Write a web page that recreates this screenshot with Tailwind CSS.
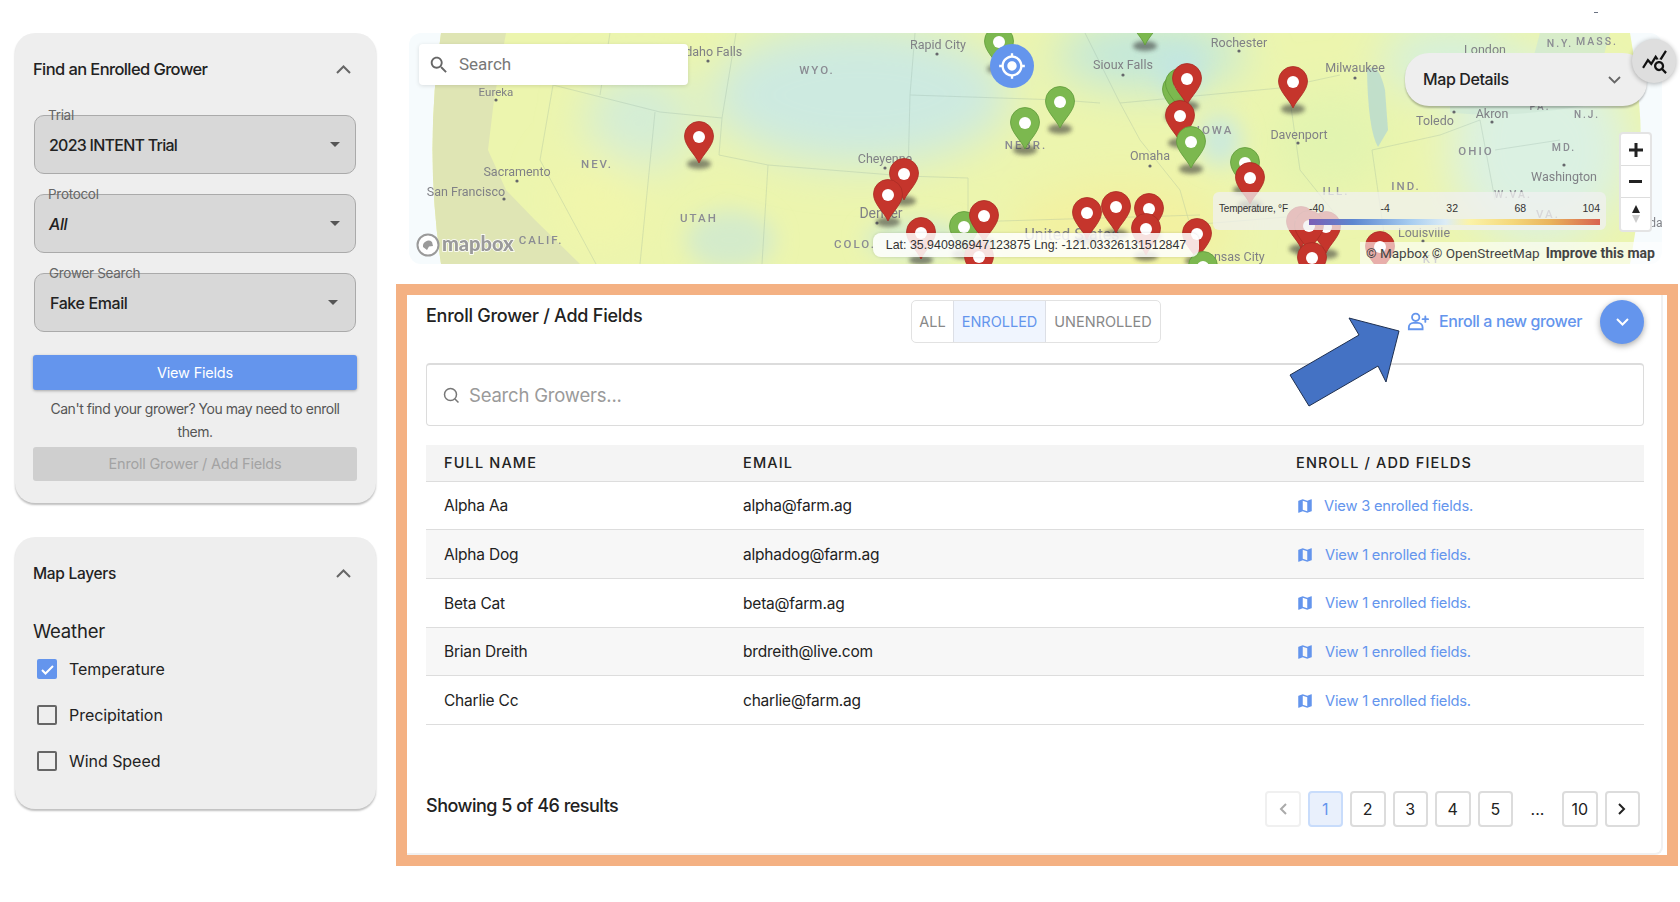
<!DOCTYPE html>
<html lang="en">
<head>
<meta charset="UTF-8">
<title>Enroll Grower</title>
<script src="https://cdn.jsdelivr.net/npm/@tailwindcss/browser@4"></script>
</head>
<body class="bg-white font-['Inter',sans-serif] text-[#222]">
<div class="relative flex w-[1680px] h-[902px] overflow-hidden pl-[15px] pt-[33px]">
    <span class="absolute left-[1594px] top-[12px] w-[4px] h-px bg-gray-500"></span>

    <!-- left column -->
    <div class="w-[361px] shrink-0 flex flex-col gap-[34px]">
        <div class="h-[470px] bg-[#eeeeee] rounded-[20px] shadow-[0_2px_2px_rgba(0,0,0,0.25)] px-[18px] pt-[26px]">
            <div class="flex items-center justify-between h-[21px] pr-[7px]">
                <h2 class="text-[16.5px] font-medium tracking-[-0.6px]">Find an Enrolled Grower</h2>
                <svg class="w-[15px] h-[9px] text-[#666]" viewBox="0 0 15 9" fill="none" stroke="currentColor" stroke-width="2"><path d="M1 8l6.5-6.5L14 8"/></svg>
            </div>
            <!-- selects -->
            <div class="flex flex-col gap-[20px] mt-[35px] pl-[1px] w-[323px]">
                <div class="relative h-[59px] bg-[#d8d8d8] border-[1.5px] border-[#aaaaaa] rounded-[10px] flex items-center justify-between pl-[14px] pr-[15px]">
                    <span class="absolute left-[8px] -top-[10px] px-[5px] text-[13.5px] leading-[18px] text-[#666] tracking-[-0.3px] [background:linear-gradient(#eeeeee_50%,transparent_50%)]">Trial</span>
                    <span class="text-[16px] font-medium tracking-[-0.75px]">2023 INTENT Trial</span>
                    <span class="w-0 h-0 border-x-[5.5px] border-x-transparent border-t-[5.5px] border-t-[#555]"></span>
                </div>
                <div class="relative h-[59px] bg-[#d8d8d8] border-[1.5px] border-[#aaaaaa] rounded-[10px] flex items-center justify-between pl-[14px] pr-[15px]">
                    <span class="absolute left-[8px] -top-[10px] px-[5px] text-[13.5px] leading-[18px] text-[#666] tracking-[-0.3px] [background:linear-gradient(#eeeeee_50%,transparent_50%)]">Protocol</span>
                    <span class="text-[16px] font-medium italic tracking-[-0.4px]">All</span>
                    <span class="w-0 h-0 border-x-[5.5px] border-x-transparent border-t-[5.5px] border-t-[#555]"></span>
                </div>
                <div class="relative h-[59px] bg-[#d8d8d8] border-[1.5px] border-[#aaaaaa] rounded-[10px] flex items-center justify-between pl-[15px] pr-[17px]">
                    <span class="absolute left-[9px] -top-[10px] px-[5px] text-[13.5px] leading-[18px] text-[#666] tracking-[-0.3px] [background:linear-gradient(#eeeeee_50%,transparent_50%)]">Grower Search</span>
                    <span class="text-[16px] font-medium tracking-[-0.4px]">Fake Email</span>
                    <span class="w-0 h-0 border-x-[5.5px] border-x-transparent border-t-[5.5px] border-t-[#555]"></span>
                </div>
            </div>
            <button class="mt-[23px] w-[324px] h-[35px] bg-[#6495ed] rounded-[3px] text-white text-[14.5px] tracking-[-0.2px] shadow-[0_1px_3px_rgba(0,0,0,0.3)]">View Fields</button>
            <p class="mt-[8px] w-[324px] text-center text-[14px] leading-[22.5px] text-[#555] tracking-[-0.47px]">Can't find your grower? You may need to enroll them.</p>
            <button class="mt-[4px] w-[324px] h-[34px] bg-[#cfcfcf] rounded-[3px] text-[#a3a3a3] text-[14.5px] tracking-[-0.2px]">Enroll Grower / Add Fields</button>
        </div>

        <div class="h-[272px] bg-[#eeeeee] rounded-[20px] shadow-[0_2px_2px_rgba(0,0,0,0.25)] px-[18px] pt-[26px]">
            <div class="flex items-center justify-between h-[21px] pr-[7px]">
                <h2 class="text-[15.5px] font-medium tracking-[-0.3px]">Map Layers</h2>
                <svg class="w-[15px] h-[9px] text-[#666]" viewBox="0 0 15 9" fill="none" stroke="currentColor" stroke-width="2"><path d="M1 8l6.5-6.5L14 8"/></svg>
            </div>
            <h3 class="mt-[35px] text-[18.5px] leading-[24px] tracking-[-0.2px]">Weather</h3>
            <div class="mt-[16px] pl-[4px] flex flex-col gap-[26px] text-[16px] tracking-[-0.05px]">
                <label class="flex items-center gap-[12px] h-[20px]">
                    <span class="w-[20px] h-[20px] rounded-[2px] bg-[#6495ed] flex items-center justify-center">
                        <svg class="w-[15px] h-[15px]" viewBox="0 0 15 15" fill="none" stroke="white" stroke-width="2"><path d="M2 8l3.5 3.5L13 4"/></svg>
                    </span>
                    Temperature
                </label>
                <label class="flex items-center gap-[12px] h-[20px]">
                    <span class="w-[20px] h-[20px] rounded-[2px] border-2 border-[#666]"></span>
                    Precipitation
                </label>
                <label class="flex items-center gap-[12px] h-[20px]">
                    <span class="w-[20px] h-[20px] rounded-[2px] border-2 border-[#666]"></span>
                    Wind Speed
                </label>
            </div>
        </div>
    </div>

    <!-- right column -->
    <div class="ml-[20px] w-[1282px] shrink-0 flex flex-col">
        <!-- map -->
        <div class="relative ml-[13px] w-[1253px] h-[231px] rounded-[12px] bg-[#f6fbfd]">
            <svg class="absolute inset-0 blur-[0.4px] font-['Roboto',sans-serif]" width="1253" height="231" viewBox="409 33 1253 231">
                <defs>
                    <filter id="b30" x="-50%" y="-50%" width="200%" height="200%"><feGaussianBlur stdDeviation="22"/></filter>
                    <filter id="b12" x="-50%" y="-50%" width="200%" height="200%"><feGaussianBlur stdDeviation="11"/></filter>
                    <filter id="sh" x="-50%" y="-80%" width="200%" height="260%"><feGaussianBlur stdDeviation="2.2"/></filter>
                    <clipPath id="globe"><path d="M441 33Q424 150 441 264L1630 264Q1652 150 1630 33Z"/></clipPath>
                    <g id="red">
                        <ellipse cx="0" cy="27" rx="12" ry="5" fill="#333" opacity=".55" filter="url(#sh)"/>
                        <path d="M0 26C-4 17-14.5 9-14.5-1A14.5 14.5 0 1 1 14.5-1C14.5 9 4 17 0 26Z" fill="#c5352c" stroke="#a92c24" stroke-width=".8"/>
                        <circle r="6" fill="#fff"/>
                    </g>
                    <g id="green">
                        <ellipse cx="0" cy="27" rx="12" ry="5" fill="#333" opacity=".55" filter="url(#sh)"/>
                        <path d="M0 26C-4 17-14.5 9-14.5-1A14.5 14.5 0 1 1 14.5-1C14.5 9 4 17 0 26Z" fill="#7cb84f" stroke="#5f9a3a" stroke-width=".8"/>
                        <circle r="6" fill="#fff"/>
                    </g>
                </defs>
                <g clip-path="url(#globe)">
                    <rect x="409" y="33" width="1253" height="231" fill="#ecf5ae"/>
                    <!-- weather colours -->
                    <g filter="url(#b30)">
                        <ellipse cx="860" cy="95" rx="150" ry="70" fill="#cdeae0"/>
                        <ellipse cx="640" cy="120" rx="55" ry="50" fill="#d4edd6"/>
                        <ellipse cx="1150" cy="55" rx="95" ry="35" fill="#c2e7dc"/>
                        <ellipse cx="1540" cy="150" rx="90" ry="95" fill="#dbf1e2"/>
                        <ellipse cx="1450" cy="60" rx="70" ry="35" fill="#d5f0dc"/>
                        <ellipse cx="1120" cy="230" rx="110" ry="50" fill="#f3f1a0"/>
                        <ellipse cx="1330" cy="140" rx="60" ry="50" fill="#e2f4b0"/>
                        <ellipse cx="600" cy="200" rx="45" ry="50" fill="#f1f6ab"/>
                    </g>
                    <g filter="url(#b12)">
                        <ellipse cx="1220" cy="140" rx="22" ry="26" fill="#cceadb"/>
                        <ellipse cx="730" cy="240" rx="45" ry="30" fill="#d4ebcb"/>
                        <ellipse cx="915" cy="240" rx="50" ry="18" fill="#d0ead2"/>
                        <ellipse cx="1180" cy="72" rx="22" ry="22" fill="#c2e6e2"/>
                    </g>
                    <!-- ocean and lake -->
                    <path d="M420 33L506 33 494 100 488 150 506 190 535 220 580 264 420 264Z" fill="#dfe5b4"/>
                    <path d="M1367 70Q1378 60 1385 90L1388 130 1378 147Q1368 130 1367 70Z" fill="#b8d9cf" opacity=".8"/>
                    <path d="M1450 100Q1500 90 1530 70L1540 33 1610 33 1590 105Q1500 120 1450 112Z" fill="#cbe6d6" opacity=".6"/>
                    <!-- state lines -->
                    <g fill="none" stroke="#8ea99c" stroke-width=".8" opacity=".32">
                        <path d="M553 85L660 112 722 118 722 118 719 155 768 165 905 176 968 178 968 222"/>
                        <path d="M736 33L722 118"/>
                        <path d="M610 33L600 95"/>
                        <path d="M655 112L640 264"/>
                        <path d="M768 165L762 264"/>
                        <path d="M915 33L910 95 908 176"/>
                        <path d="M910 95L1060 100 1100 103"/>
                        <path d="M1120 103L1280 88 1340 75"/>
                        <path d="M1085 33L1120 103 1140 140 1180 190 1190 225"/>
                        <path d="M1190 225L1310 215"/>
                        <path d="M1290 100L1300 170 1340 220"/>
                        <path d="M1372 150L1385 240"/>
                        <path d="M1372 150L1440 135 1480 120 1495 200"/>
                        <path d="M1495 150L1560 140"/>
                        <path d="M968 222L1200 215"/>
                        <path d="M553 85L540 160 596 264"/>
                    </g>
                </g>
                <!-- labels -->
                <g fill="#808186" font-size="12.5" text-anchor="middle">
                    <text x="712" y="56">Idaho Falls</text>
                    <text x="938" y="49">Rapid City</text>
                    <text x="1123" y="69">Sioux Falls</text>
                    <text x="1239" y="47">Rochester</text>
                    <text x="1355" y="72">Milwaukee</text>
                    <text x="1485" y="54">London</text>
                    <text x="496" y="96" font-size="11.5">Eureka</text>
                    <text x="517" y="176">Sacramento</text>
                    <text x="466" y="196">San Francisco</text>
                    <text x="885" y="163">Cheyenne</text>
                    <text x="881" y="218" font-size="14">Denver</text>
                    <text x="1150" y="160">Omaha</text>
                    <text x="1299" y="139">Davenport</text>
                    <text x="1435" y="125">Toledo</text>
                    <text x="1492" y="118">Akron</text>
                    <text x="1564" y="181">Washington</text>
                    <text x="1424" y="237">Louisville</text>
                    <text x="1232" y="261">Kansas City</text>
                    <text x="1072" y="240" font-size="16">United States</text>
                </g>
                <g fill="#8b8c93" font-size="11.5" font-weight="500" letter-spacing="2" text-anchor="middle">
                    <text x="817" y="74">WYO.</text>
                    <text x="597" y="168">NEV.</text>
                    <text x="699" y="222">UTAH</text>
                    <text x="541" y="244">CALIF.</text>
                    <text x="855" y="248">COLO.</text>
                    <text x="1026" y="149">NEBR.</text>
                    <text x="1215" y="134">IOWA</text>
                    <text x="1476" y="155">OHIO</text>
                    <text x="1564" y="151" font-size="10.5">MD.</text>
                    <text x="1587" y="118" font-size="10">N.J.</text>
                    <text x="1540" y="110" font-size="10">PA.</text>
                    <text x="1406" y="190">IND.</text>
                    <text x="1336" y="195">ILL.</text>
                    <text x="1513" y="198" font-size="10.5">W.VA.</text>
                    <text x="1548" y="218">VA.</text>
                    <text x="1560" y="47" font-size="10.5">N.Y.</text>
                    <text x="1597" y="45" font-size="10.5">MASS.</text>
                    <text x="1432" y="263">KY</text>
                </g>
                <g fill="#66676c">
                    <circle cx="708" cy="61" r="1.6"/><circle cx="937" cy="54" r="1.6"/><circle cx="1123" cy="75" r="1.6"/>
                    <circle cx="1239" cy="51" r="1.6"/><circle cx="1355" cy="78" r="1.6"/><circle cx="496" cy="100" r="1.6"/>
                    <circle cx="517" cy="181" r="1.6"/><circle cx="504" cy="199" r="1.6"/><circle cx="885" cy="168" r="1.6"/>
                    <circle cx="877" cy="223" r="1.6"/><circle cx="1150" cy="166" r="1.6"/><circle cx="1298" cy="143" r="1.6"/>
                    <circle cx="1454" cy="112" r="1.6"/><circle cx="1492" cy="122" r="1.6"/><circle cx="1564" cy="165" r="1.6"/><circle cx="1423" cy="241" r="1.6"/>
                </g>
                <text x="1656" y="227" fill="#808186" font-size="12" text-anchor="middle">da</text>
                <!-- pins -->
                <use href="#green" x="999" y="42"/>
                <use href="#green" x="1145" y="19"/>
                <use href="#green" x="1025" y="123"/>
                <use href="#green" x="1060" y="102"/>
                <use href="#green" x="1177" y="90"/>
                <use href="#green" x="1180" y="84"/>
                <use href="#red" x="699" y="137"/>
                <use href="#red" x="904" y="174"/>
                <use href="#red" x="888" y="195"/>
                <use href="#red" x="921" y="233"/>
                <use href="#green" x="964" y="227"/>
                <use href="#red" x="984" y="216"/>
                <use href="#red" x="979" y="257"/>
                <use href="#red" x="1187" y="79"/>
                <use href="#red" x="1180" y="116"/>
                <use href="#green" x="1191" y="142"/>
                <use href="#red" x="1293" y="82"/>
                <use href="#green" x="1245" y="163"/>
                <use href="#red" x="1250" y="178"/>
                <use href="#red" x="1087" y="213"/>
                <use href="#red" x="1149" y="209"/>
                <use href="#red" x="1116" y="207"/>
                <use href="#red" x="1146" y="229"/>
                <use href="#red" x="1197" y="234"/>
                <use href="#green" x="1203" y="267"/>
                <use href="#red" x="1301" y="222"/>
                <use href="#red" x="1326" y="227"/>
                <use href="#red" x="1309" y="226"/>
                <use href="#red" x="1312" y="258"/>
                <use href="#red" x="1380" y="247"/>
                <!-- mapbox logo -->
                <g>
                    <circle cx="428" cy="245" r="10.5" fill="#fff" stroke="#9a9a9a" stroke-width="2"/>
                    <path d="M423 247a5.500 5.500 0 0 1 9-5l1 4-4 .5-2 3.500z" fill="#9a9a9a"/>
                    <text x="442" y="251" fill="#9a9a9a" stroke="#fff" stroke-width="1.500" paint-order="stroke" font-size="20" font-weight="900" font-family="Lato, sans-serif">mapbox</text>
                </g>
            </svg>

            <!-- map overlays -->
            <div class="absolute left-[10px] top-[11px] w-[269px] h-[41px] bg-white rounded-[4px] shadow-[0_1px_4px_rgba(0,0,0,0.12)] flex items-center pl-[9px] gap-[9px] font-['Roboto',sans-serif] text-[17px] text-[#777]">
                <svg class="w-[22px] h-[22px] text-[#666]" viewBox="0 0 24 24" fill="currentColor"><path d="M15.500 14h-.79l-.28-.27C15.410 12.590 16 11.110 16 9.500 16 5.910 13.090 3 9.500 3S3 5.910 3 9.500 5.910 16 9.500 16c1.610 0 3.090-.59 4.230-1.570l.27.28v.79l5 4.990L20.490 19l-4.990-5zm-6 0C7.010 14 5 11.990 5 9.500S7.010 5 9.500 5 14 7.010 14 9.500 11.990 14 9.500 14z"/></svg>
                Search
            </div>
            <div class="absolute left-[581px] top-[11px] w-[44px] h-[44px] rounded-full bg-[#6495ed] flex items-center justify-center">
                <svg class="w-[28px] h-[28px] text-white" viewBox="0 0 24 24" fill="currentColor"><path d="M12 8c-2.210 0-4 1.790-4 4s1.790 4 4 4 4-1.790 4-4-1.790-4-4-4zm8.940 3c-.46-4.170-3.770-7.480-7.940-7.940V1h-2v2.060C6.830 3.520 3.520 6.830 3.060 11H1v2h2.060c.46 4.170 3.770 7.480 7.940 7.940V23h2v-2.060c4.170-.46 7.480-3.770 7.940-7.940H23v-2h-2.060zM12 19c-3.870 0-7-3.130-7-7s3.130-7 7-7 7 3.130 7 7-3.130 7-7 7z"/></svg>
            </div>
            <div class="absolute left-[996px] top-[20px] w-[242px] h-[53px] bg-[#eeeeee] rounded-[24px] shadow-[0_2px_2px_rgba(0,0,0,0.25)] flex items-center justify-between pl-[18px] pr-[26px]">
                <span class="-mt-[1px] text-[16px] font-medium tracking-[-0.4px]">Map Details</span>
                <svg class="w-[13px] h-[8px] text-[#666]" viewBox="0 0 13 8" fill="none" stroke="currentColor" stroke-width="1.800"><path d="M1 1l5.500 5.500L12 1"/></svg>
            </div>
            <div class="absolute left-[1223px] top-[6px] w-[44px] h-[44px] rounded-full bg-[#dedede] shadow-[0_1px_5px_rgba(0,0,0,0.3)] flex items-center justify-center">
                <svg class="w-[27px] h-[27px] text-[#111]" viewBox="0 0 24 24" fill="currentColor"><path d="M19.880 18.470c.44-.7.7-1.510.7-2.390 0-2.490-2.010-4.500-4.500-4.500s-4.500 2.010-4.500 4.500 2.010 4.500 4.490 4.500c.88 0 1.700-.26 2.390-.7L21.580 23 23 21.580l-3.120-3.110zm-3.800.11c-1.380 0-2.500-1.120-2.500-2.500s1.120-2.500 2.500-2.500 2.500 1.120 2.500 2.500-1.120 2.500-2.500 2.500zm-.36-8.500c-.74.02-1.450.18-2.100.45l-.55-.83-3.800 6.180-3.010-3.520-3.630 5.810L1 17l5-8 3 3.500L13 6l2.720 4.080zm2.590.5c-.64-.28-1.330-.45-2.050-.49L21.380 2 23 3.180l-4.690 7.400z"/></svg>
            </div>
            <div class="absolute left-[1210px] top-[99px] w-[33px] h-[100px] bg-white border-2 border-[#e4e4e4] rounded-[4px] flex flex-col divide-y divide-[#ddd]">
                <div class="h-[32px] flex items-center justify-center">
                    <svg class="w-[14px] h-[14px]" viewBox="0 0 14 14" fill="#222"><path d="M5.500 0h3v5.500H14v3H8.500V14h-3V8.500H0v-3h5.500z"/></svg>
                </div>
                <div class="h-[32px] flex items-center justify-center">
                    <span class="w-[13px] h-[3px] bg-[#222]"></span>
                </div>
                <div class="flex-1 flex flex-col items-center justify-center gap-[2px]">
                    <span class="w-0 h-0 border-x-[4.500px] border-x-transparent border-b-[8px] border-b-[#222]"></span>
                    <span class="w-0 h-0 border-x-[4.500px] border-x-transparent border-t-[8px] border-t-[#ccc]"></span>
                </div>
            </div>
            <div class="absolute left-[804px] top-[159px] w-[393px] h-[38px] bg-[#f0f0f0]/75 rounded-[6px] font-['Liberation_Sans',sans-serif] text-[10px] text-[#333]">
                <span class="absolute left-[6px] top-[9px] tracking-[-0.2px]">Temperature, °F</span>
                <div class="absolute left-[96px] right-[6px] top-[9px] flex justify-between text-[10.5px]">
                    <span>-40</span><span>-4</span><span>32</span><span>68</span><span>104</span>
                </div>
                <div class="absolute left-[96px] right-[6px] top-[27px] h-[6px] bg-[linear-gradient(90deg,#7b5fb5_0%,#5c86d0_15%,#a7cdf0_35%,#dcecf5_47%,#fbf3a8_55%,#f4d77a_70%,#e9b35c_83%,#d8624f_100%)]"></div>
            </div>
            <div class="absolute left-[464px] top-[200px] w-[326px] h-[24px] bg-white/85 rounded-[8px] shadow-[0_0_3px_rgba(0,0,0,0.15)] flex items-center justify-center font-['Liberation_Sans',sans-serif] text-[12.4px] text-[#333]">Lat: 35.940986947123875 Lng: -121.03326131512847</div>
            <div class="absolute left-[951px] bottom-0 w-[302px] h-[22px] bg-white/60 flex items-center pl-[6px] font-['Roboto',sans-serif] text-[13.5px] text-[#444] gap-[6px]">
                <span>© Mapbox © OpenStreetMap</span><span class="font-bold text-[14px]">Improve this map</span>
            </div>
        </div>

        <!-- enroll panel -->
        <div class="relative mt-[20px] w-[1282px] h-[582px] border-[11px] border-[#f4b183] bg-white">
            <div class="w-[1256px] h-[560px] border-r-2 border-b-2 border-[#f1f1f1] rounded-br-[8px] pl-[19px] pr-[17px]">
                <div class="flex items-start h-[68px]">
                    <h1 class="w-[485px] pt-[9px] text-[18px] leading-[24px] font-medium tracking-[-0.25px]">Enroll Grower / Add Fields</h1>
                    <div class="mt-[5px] flex h-[43px] border border-[#e2e2e2] rounded-[5px] text-[14.5px] text-[#888] items-stretch">
                        <span class="w-[41px] flex items-center justify-center">ALL</span>
                        <span class="w-[93px] flex items-center justify-center bg-[#f0f5fe] text-[#6495ed] border-x border-[#dcdfe6]">ENROLLED</span>
                        <span class="w-[114px] flex items-center justify-center">UNENROLLED</span>
                    </div>
                    <div class="ml-auto mt-[5px] flex items-center h-[44px]">
                        <svg class="w-[22px] h-[22px] -mt-[2px] text-[#6495ed]" viewBox="0 0 24 24" fill="none" stroke="currentColor" stroke-width="2" stroke-linecap="round"><circle cx="9.500" cy="8" r="4"/><path d="M2 21v-2a5 5 0 0 1 5-5h5a5 5 0 0 1 5 5v2z"/><path d="M20 7v6M17 10h6"/></svg>
                        <span class="ml-[10px] -mt-[3px] text-[#6495ed] text-[16px] font-medium tracking-[-0.4px]">Enroll a new grower</span>
                        <button class="ml-[18px] w-[44px] h-[44px] rounded-full bg-[#6495ed] shadow-[0_2px_6px_rgba(0,0,0,0.35)] flex items-center justify-center">
                            <svg class="w-[13px] h-[8px]" viewBox="0 0 13 8" fill="none" stroke="white" stroke-width="2"><path d="M1 1l5.500 5.500L12 1"/></svg>
                        </button>
                    </div>
                </div>
                <div class="h-[63px] border border-[#dcdcdc] border-t-2 rounded-[4px] flex items-center pl-[16px] gap-[9px] text-[18.5px] text-[#9a9a9a] tracking-[-0.2px]">
                    <svg class="w-[17px] h-[17px] text-[#777]" viewBox="0 0 17 17" fill="none" stroke="currentColor" stroke-width="1.500"><circle cx="7.500" cy="7.500" r="6"/><path d="M12 12l3.500 3.500"/></svg>
                    <span class="mt-[1px]">Search Growers...</span>
                </div>
                <table class="mt-[19px] w-full border-collapse table-fixed text-[15.5px] tracking-[-0.2px]">
                    <thead>
                        <tr class="h-[36px] bg-[#f4f4f4] text-left text-[14.5px] font-medium tracking-[1.15px]">
                            <th class="w-[317px] pl-[18px] font-medium">FULL NAME</th>
                            <th class="w-[553px] font-medium">EMAIL</th>
                            <th class="font-medium">ENROLL / ADD FIELDS</th>
                        </tr>
                    </thead>
                    <tbody>
                        <tr class="h-[48.700px] border-y border-[#dddddd]">
                            <td class="pl-[18px] pt-px">Alpha Aa</td><td class="pt-px">alpha@farm.ag</td>
                            <td class="pt-px"><span class="flex items-center gap-[10px] text-[#6495ed] text-[14.7px]"><svg class="w-[18px] h-[18px]" viewBox="0 0 24 24" fill="currentColor"><path d="M20.500 3l-.16.03L15 5.100 9 3 3.360 4.900c-.21.07-.36.25-.36.48V20.500c0 .28.22.5.5.5l.16-.03L9 18.900l6 2.100 5.640-1.900c.21-.07.36-.25.36-.48V3.500c0-.28-.22-.5-.5-.5zM15 19l-6-2.110V5l6 2.110V19z"/></svg>View 3 enrolled fields.</span></td>
                        </tr>
                        <tr class="h-[48.700px] border-b border-[#dddddd] bg-[#f7f7f7]">
                            <td class="pl-[18px] pt-px">Alpha Dog</td><td class="pt-px">alphadog@farm.ag</td>
                            <td class="pt-px"><span class="flex items-center gap-[11px] text-[#6495ed] text-[14.7px]"><svg class="w-[18px] h-[18px]" viewBox="0 0 24 24" fill="currentColor"><path d="M20.500 3l-.16.03L15 5.100 9 3 3.360 4.900c-.21.07-.36.25-.36.48V20.500c0 .28.22.5.5.5l.16-.03L9 18.900l6 2.100 5.640-1.900c.21-.07.36-.25.36-.48V3.500c0-.28-.22-.5-.5-.5zM15 19l-6-2.110V5l6 2.110V19z"/></svg>View 1 enrolled fields.</span></td>
                        </tr>
                        <tr class="h-[48.700px] border-b border-[#dddddd]">
                            <td class="pl-[18px] pt-px">Beta Cat</td><td class="pt-px">beta@farm.ag</td>
                            <td class="pt-px"><span class="flex items-center gap-[11px] text-[#6495ed] text-[14.7px]"><svg class="w-[18px] h-[18px]" viewBox="0 0 24 24" fill="currentColor"><path d="M20.500 3l-.16.03L15 5.100 9 3 3.360 4.900c-.21.07-.36.25-.36.48V20.500c0 .28.22.5.5.5l.16-.03L9 18.900l6 2.100 5.640-1.900c.21-.07.36-.25.36-.48V3.500c0-.28-.22-.5-.5-.5zM15 19l-6-2.110V5l6 2.110V19z"/></svg>View 1 enrolled fields.</span></td>
                        </tr>
                        <tr class="h-[48.700px] border-b border-[#dddddd] bg-[#f7f7f7]">
                            <td class="pl-[18px] pt-px">Brian Dreith</td><td class="pt-px">brdreith@live.com</td>
                            <td class="pt-px"><span class="flex items-center gap-[11px] text-[#6495ed] text-[14.7px]"><svg class="w-[18px] h-[18px]" viewBox="0 0 24 24" fill="currentColor"><path d="M20.500 3l-.16.03L15 5.100 9 3 3.360 4.900c-.21.07-.36.25-.36.48V20.500c0 .28.22.5.5.5l.16-.03L9 18.900l6 2.100 5.640-1.900c.21-.07.36-.25.36-.48V3.500c0-.28-.22-.5-.5-.5zM15 19l-6-2.110V5l6 2.110V19z"/></svg>View 1 enrolled fields.</span></td>
                        </tr>
                        <tr class="h-[48.700px] border-b border-[#dddddd]">
                            <td class="pl-[18px] pt-px">Charlie Cc</td><td class="pt-px">charlie@farm.ag</td>
                            <td class="pt-px"><span class="flex items-center gap-[11px] text-[#6495ed] text-[14.7px]"><svg class="w-[18px] h-[18px]" viewBox="0 0 24 24" fill="currentColor"><path d="M20.500 3l-.16.03L15 5.100 9 3 3.360 4.900c-.21.07-.36.25-.36.48V20.500c0 .28.22.5.5.5l.16-.03L9 18.900l6 2.100 5.640-1.900c.21-.07.36-.25.36-.48V3.500c0-.28-.22-.5-.5-.5zM15 19l-6-2.110V5l6 2.110V19z"/></svg>View 1 enrolled fields.</span></td>
                        </tr>
                    </tbody>
                </table>
                <div class="mt-[66px] flex items-start justify-between pr-[4px]">
                    <span class="mt-[1px] text-[18px] font-medium tracking-[-0.5px]">Showing 5 of 46 results</span>
                    <div class="flex items-center gap-[7px] text-[16px]">
                        <span class="w-[35.500px] h-[36px] border-2 border-[#f0f0f0] rounded-[4px] flex items-center justify-center"><svg class="w-[8px] h-[12px]" viewBox="0 0 8 12" fill="none" stroke="#aaa" stroke-width="2"><path d="M7 1L2 6l5 5"/></svg></span>
                        <span class="w-[35.500px] h-[36px] border-2 border-[#c8dcfb] bg-[#e9f0fc] text-[#6495ed] rounded-[4px] flex items-center justify-center">1</span>
                        <span class="w-[35.500px] h-[36px] border-2 border-[#dcdcdc] rounded-[4px] flex items-center justify-center">2</span>
                        <span class="w-[35.500px] h-[36px] border-2 border-[#dcdcdc] rounded-[4px] flex items-center justify-center">3</span>
                        <span class="w-[35.500px] h-[36px] border-2 border-[#dcdcdc] rounded-[4px] flex items-center justify-center">4</span>
                        <span class="w-[35.500px] h-[36px] border-2 border-[#dcdcdc] rounded-[4px] flex items-center justify-center">5</span>
                        <span class="w-[35px] h-[36px] flex items-center justify-center">...</span>
                        <span class="w-[35.500px] h-[36px] border-2 border-[#dcdcdc] rounded-[4px] flex items-center justify-center">10</span>
                        <span class="w-[35.500px] h-[36px] border-2 border-[#dcdcdc] rounded-[4px] flex items-center justify-center"><svg class="w-[8px] h-[12px]" viewBox="0 0 8 12" fill="none" stroke="#222" stroke-width="2"><path d="M1 1l5 5-5 5"/></svg></span>
                    </div>
                </div>
            </div>
            <!-- annotation arrow -->
            <svg class="absolute left-[-407px] top-[-295px] pointer-events-none" width="1680" height="902" viewBox="0 0 1680 902">
                <path d="M1399 331L1349 318 1359 335 1290 375 1309 406 1378 366 1386 382Z" fill="#4472c4" stroke="#1f3050" stroke-width="1"/>
            </svg>
        </div>
    </div>
</div>
</body>
</html>
